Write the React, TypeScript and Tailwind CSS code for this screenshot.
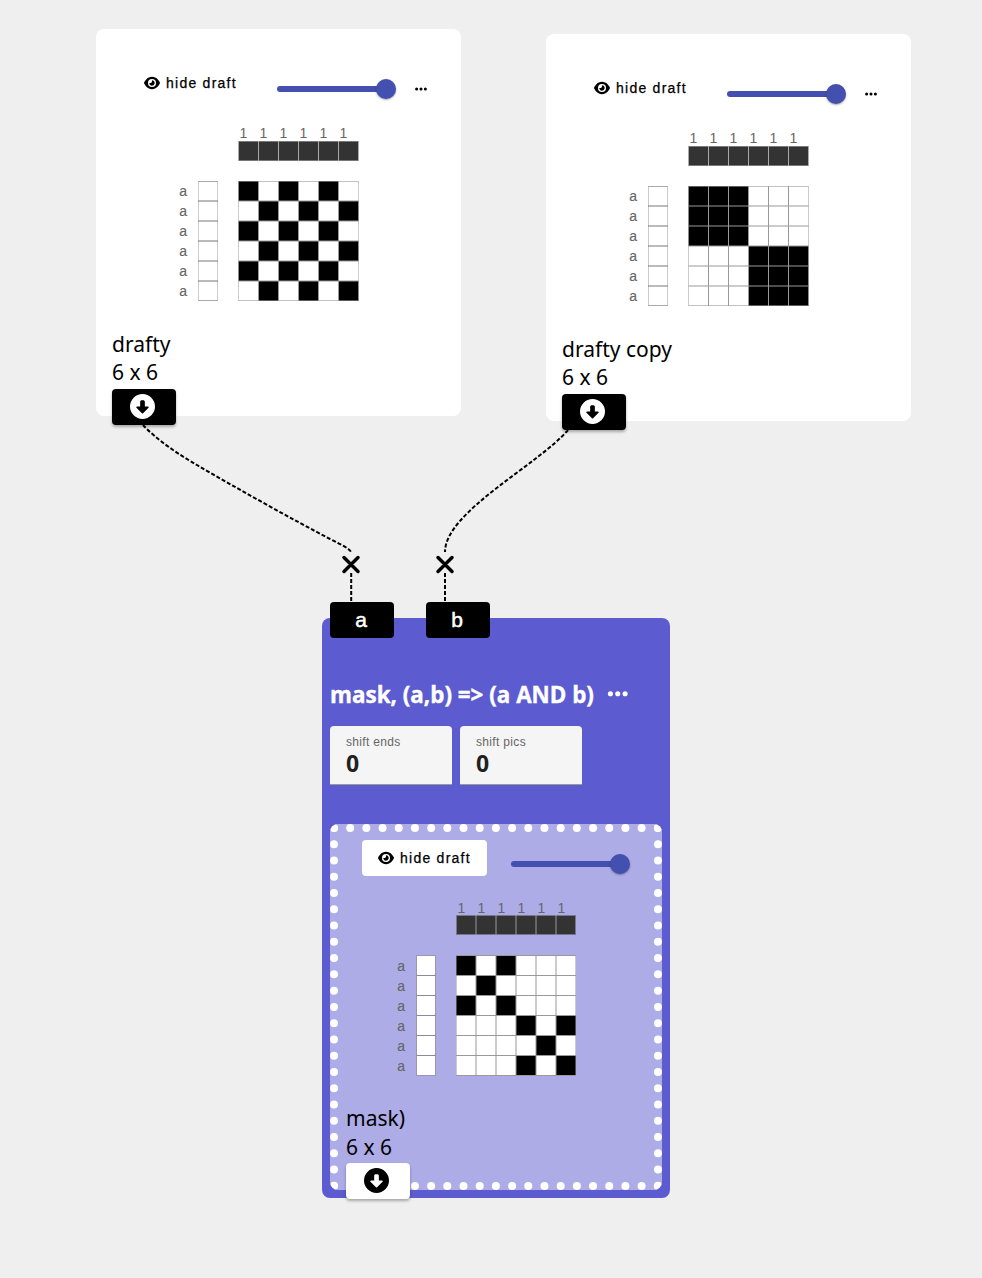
import { FaCircleDown, FaEllipsis, FaEye } from "react-icons/fa6";

const DRAFTY = ["101010", "010101", "101010", "010101", "101010", "010101"];
const COPY = ["111000", "111000", "111000", "000111", "000111", "000111"];
const MASK = ["101000", "010000", "101000", "000101", "000010", "000101"];
const STEPS = [0, 1, 2, 3, 4, 5];
const INNER = [1, 2, 3, 4, 5];

type ChartProps = { rows: string[]; nested?: boolean };

function DraftChart({ rows, nested = false }: ChartProps) {
  const x0 = nested ? 60 : 60.5;
  const y0 = nested ? 56.5 : 56;
  const soft = "#ccc";
  return (
    <svg width="184" height="178" viewBox="0 0 184 178" className="block overflow-visible" fontFamily="'Liberation Sans', Arial, sans-serif">
      {STEPS.map((c) => (
        <text key={c} x={61.5 + c * 20} y={nested ? 13.8 : 13} fontSize="14" fill="#666">1</text>
      ))}
      <rect x={x0} y="16" width="120" height="20" fill="#333" />
      <path d={`M${x0} 16.5h120M${x0} 35.5h120`} stroke={nested ? "#77768a" : "#777"} />
      {INNER.map((c) => (
        <path key={c} d={`M${x0 + c * 20} 16v20`} stroke={nested ? "#999" : "#aaa"} />
      ))}
      <path d={`M60.5 16v20M${nested ? 179.5 : 180.5} 16v20`} stroke={nested ? "#77768a" : "#aaa"} />

      {rows.map((_, r) => (
        <text key={r} x="1.3" y={(nested ? 71.8 : 71) + r * 20} fontSize="14" fill="#666" stroke="#666" strokeWidth="0.15">a</text>
      ))}
      <rect x="20" y={y0} width="20" height="120" fill="#fff" />
      <path d={`M20.5 ${y0}v120M39.5 ${y0}v120`} stroke={nested ? "#9998aa" : soft} />
      {INNER.map((r) => (
        <path key={r} d={`M20 ${y0 + r * 20}h20`} stroke={nested ? "#8a8a99" : "#777"} />
      ))}
      <path d={`M20 56.5h20M20 ${nested ? 176.5 : 175.5}h20`} stroke={nested ? "#9998aa" : "#aaa"} />

      <rect x={x0} y={y0} width="120" height="120" fill="#fff" />
      {rows.map((row, r) =>
        row.split("").map((cell, c) =>
          cell === "1" ? <rect key={`${r}-${c}`} x={x0 + c * 20} y={y0 + r * 20} width="20" height="20" fill="#000" /> : null,
        ),
      )}
      {INNER.map((i) => (
        <path key={i} d={`M${x0 + i * 20} ${y0}v120M${x0} ${y0 + i * 20}h120`} stroke="#999" />
      ))}
      <g stroke="#999" strokeOpacity={0.5}>
        <path d={`M60.5 ${y0}v120M${nested ? 179.5 : 180.5} ${y0}v120`} />
        <path d={`M${x0} 56.5h120M${x0} ${nested ? 176.5 : 175.5}h120`} strokeOpacity={nested ? 1 : 0.6} />
      </g>
    </svg>
  );
}

function Slider() {
  return (
    <div className="flex h-5 w-[120px] items-center">
      <div className="h-1.5 w-[104px] rounded-l-full bg-[#4450af]" />
      <div className="-ml-[5px] size-5 shrink-0 rounded-full bg-[#4450af] shadow-[0_1px_2px_rgba(0,0,0,0.35)]" />
    </div>
  );
}

function HideButton({ raised = false }: { raised?: boolean }) {
  return (
    <button className={`flex h-9 w-[125px] items-center rounded pl-4 font-['Liberation_Sans',Arial,sans-serif] text-[14px] tracking-[1.25px] text-black [-webkit-text-stroke:0.25px_black] ${raised ? "bg-white pt-px" : ""}`}>
      <FaEye className="mr-1.5 size-4 shrink-0" />
      <span className="whitespace-nowrap">hide draft</span>
    </button>
  );
}

function Outlet({ light = false }: { light?: boolean }) {
  return (
    <button className={`flex h-9 w-16 items-center rounded pb-px pl-[18px] shadow-[0_2px_3px_rgba(0,0,0,0.3)] ${light ? "bg-white text-black" : "bg-black text-white"}`}>
      <FaCircleDown className="size-[25px]" />
    </button>
  );
}

function DraftCard({ name, rows }: { name: string; rows: string[] }) {
  return (
    <div className="flex h-[387px] w-[365px] flex-col rounded-lg bg-white pt-9">
      <div className="flex pl-8">
        <HideButton />
        <div className="ml-6 pt-3.5"><Slider /></div>
        <FaEllipsis className="ml-[17px] mt-[17px] size-3.5" />
      </div>
      <div className="ml-[82px] mt-6"><DraftChart rows={rows} /></div>
      <div className="ml-4 mt-[27px] text-[21px] leading-7 text-black">
        <p>{name}</p>
        <p>6 x 6</p>
        <div className="mt-[3px]"><Outlet /></div>
      </div>
    </div>
  );
}

function Field({ label }: { label: string }) {
  return (
    <label className="flex h-[59px] w-[122px] flex-col rounded-t border-b border-[#999] bg-[#f5f5f5] pl-4 pt-2">
      <span className="font-['Liberation_Sans',Arial,sans-serif] text-[12px] leading-4 tracking-[0.33px] text-[#666]">{label}</span>
      <span className="-mt-px font-['Open_Sans',sans-serif] text-[23px] font-bold leading-7 text-[#212121]">0</span>
    </label>
  );
}

function Inlet({ label }: { label: string }) {
  return (
    <button className="flex h-9 w-16 items-center justify-center rounded bg-black pr-0.5 font-['Liberation_Sans',Arial,sans-serif] text-[21px] text-white [-webkit-text-stroke:0.5px_white]">
      {label}
    </button>
  );
}

function MaskOperation() {
  return (
    <div className="flex h-[580px] w-[348px] flex-col rounded-lg bg-[#5c5bcf] px-2">
      <div className="-mt-4 flex gap-8">
        <Inlet label="a" />
        <Inlet label="b" />
      </div>
      <div className="mt-10 flex h-8 items-center text-white">
        <h2 className="whitespace-nowrap pt-0.5 font-['Open_Sans',sans-serif] text-[22.4px] font-bold [-webkit-text-stroke:0.4px_white]">mask, (a,b) =&gt; (a AND b)</h2>
        <FaEllipsis className="ml-3 size-[23.5px]" />
      </div>
      <div className="mt-4 flex gap-2">
        <Field label="shift ends" />
        <Field label="shift pics" />
      </div>
      <div className="mt-[39px] flex h-[366px] w-[332px] shrink-0 flex-col rounded-lg border-8 border-dotted border-white bg-[#adace7]">
        <div className="flex pl-6 pt-[7.5px]">
          <HideButton raised />
          <div className="ml-6 pt-3.5"><Slider /></div>
        </div>
        <div className="ml-[58px] mt-[23.5px]"><DraftChart rows={MASK} nested /></div>
        <div className="ml-2 mt-[27px] text-[21px] text-black">
          <p className="leading-7">mask)</p>
          <p className="leading-[30px]">6 x 6</p>
          <div className="mt-px"><Outlet light /></div>
        </div>
      </div>
    </div>
  );
}

export default function App() {
  return (
    <main className="relative h-[1278px] w-[982px] overflow-hidden bg-[#efefef] font-['Noto_Sans',sans-serif]">
      <div className="absolute left-24 top-[29px]"><DraftCard name="drafty" rows={DRAFTY} /></div>
      <div className="absolute left-[546px] top-[34px]"><DraftCard name="drafty copy" rows={COPY} /></div>
      <div className="absolute left-[322px] top-[618px]"><MaskOperation /></div>
      <svg className="pointer-events-none absolute left-0 top-0" width="982" height="1278" fill="none" stroke="#000" strokeWidth="2">
        <g strokeDasharray="4 2">
          <path d="M143 425C157 440 178 454 197 465C238 489 290 518 330 539C342 545 350 549 351 552" />
          <path d="M568 430C538 465 445 512 445 552" />
          <path d="M351.2 573V602M445 573V602" />
        </g>
        <path d="M344 557.5l14 14m0-14l-14 14M438 557.5l14 14m0-14l-14 14" strokeWidth="3.5" strokeLinecap="round" />
      </svg>
    </main>
  );
}
